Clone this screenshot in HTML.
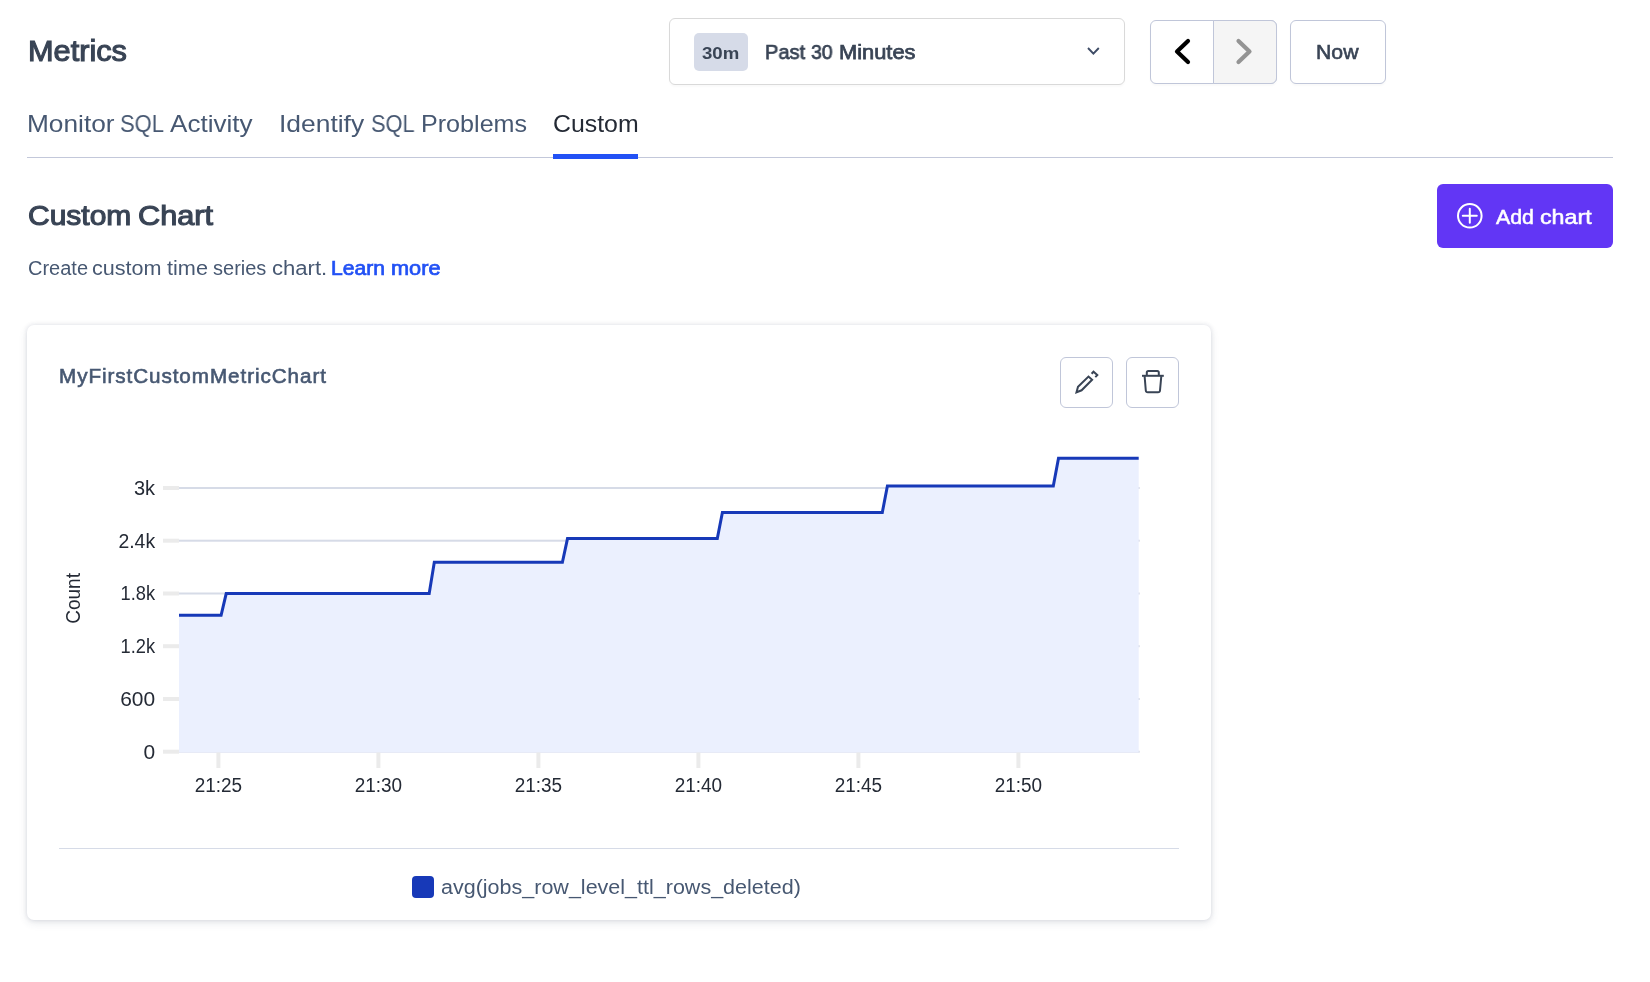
<!DOCTYPE html>
<html lang="en"><head><meta charset="utf-8"><title>Metrics</title>
<style>
html,body{margin:0;padding:0;background:#fff}
body{width:1650px;height:982px;position:relative;overflow:hidden;font-family:"Liberation Sans",sans-serif}
.g{position:absolute;left:0;top:0;width:0;height:0;line-height:1;white-space:nowrap}
.t{position:absolute;display:block;white-space:nowrap;line-height:1;transform-origin:0 0;margin:0;will-change:transform}
.abs{position:absolute;box-sizing:border-box}
#divider{left:27px;top:157px;width:1586px;height:1px;background:#c3c8da}
#tabbar{left:553px;top:154px;width:85px;height:5px;background:#2251f5}
#dd{left:669px;top:18px;width:456px;height:67px;border:1px solid #d9d9d9;border-radius:6px;background:#fff;box-shadow:0 2px 2px rgba(0,0,0,.025)}
#badge{left:694px;top:33px;width:54px;height:38px;background:#d6dbe8;border-radius:5px}
#nav{left:1150px;top:20px;width:127px;height:64px;border:1px solid #c0c6d9;border-radius:6px;background:#fff;overflow:hidden;box-shadow:0 2px 2px rgba(0,0,0,.025)}
#navr{left:1213px;top:20px;width:64px;height:64px;border:1px solid #c0c6d9;border-radius:0 6px 6px 0;background:#f5f5f5}
#nowb{left:1290px;top:20px;width:96px;height:64px;border:1px solid #c0c6d9;border-radius:6px;background:#fff;box-shadow:0 2px 2px rgba(0,0,0,.025)}
#addb{left:1437px;top:184px;width:176px;height:64px;background:#6236f5;border-radius:6px}
#card{left:27px;top:325px;width:1184px;height:595px;background:#fff;border-radius:7px;box-shadow:0 0 4px rgba(60,70,100,.15),0 3px 9px rgba(60,70,100,.12)}
#eb{left:1060px;top:357px;width:53px;height:51px;border:1px solid #c0c6d9;border-radius:6px;background:#fff}
#db{left:1126px;top:357px;width:53px;height:51px;border:1px solid #c0c6d9;border-radius:6px;background:#fff}
#sep{left:59px;top:848px;width:1120px;height:1px;background:#d6dbe7}
#sw{left:412px;top:876px;width:22px;height:22px;background:#1739b8;border-radius:4px}
</style></head><body>
<div class="abs" id="divider"></div><div class="abs" id="tabbar"></div>
<div class="abs" id="dd"></div><div class="abs" id="badge"></div>
<div class="abs" id="nav"></div><div class="abs" id="navr"></div><div class="abs" id="nowb"></div>
<div class="abs" id="addb"></div>
<div class="abs" id="card"></div>
<div class="abs" id="eb"></div><div class="abs" id="db"></div>
<div class="abs" id="sep"></div><div class="abs" id="sw"></div>
<svg id="chart" width="1650" height="982" viewBox="0 0 1650 982" style="position:absolute;left:0;top:0;will-change:transform" font-family="'Liberation Sans', sans-serif">
<rect x="163" y="749.7" width="16" height="4" fill="#ebebeb"/>
<rect x="179" y="750.7" width="960.7" height="2" fill="#d6dbe7"/>
<rect x="163" y="697.0" width="16" height="4" fill="#ebebeb"/>
<rect x="179" y="698.0" width="960.7" height="2" fill="#d6dbe7"/>
<rect x="163" y="644.2" width="16" height="4" fill="#ebebeb"/>
<rect x="179" y="645.2" width="960.7" height="2" fill="#d6dbe7"/>
<rect x="163" y="591.5" width="16" height="4" fill="#ebebeb"/>
<rect x="179" y="592.5" width="960.7" height="2" fill="#d6dbe7"/>
<rect x="163" y="538.7" width="16" height="4" fill="#ebebeb"/>
<rect x="179" y="539.7" width="960.7" height="2" fill="#d6dbe7"/>
<rect x="163" y="486.0" width="16" height="4" fill="#ebebeb"/>
<rect x="179" y="487.0" width="960.7" height="2" fill="#d6dbe7"/>
<path d="M179.0,615.3 L221.1,615.3 L226.2,593.6 L429.2,593.6 L434.3,562.2 L562.4,562.2 L567.5,538.6 L717.3,538.6 L722.4,512.5 L882.3,512.5 L887.4,486.0 L1053.3,486.0 L1058.5,458.3 L1138.7,458.3 L1138.7,752.5 L179.0,752.5 Z" fill="#ebf0fe"/>
<path d="M179.0,615.3 L221.1,615.3 L226.2,593.6 L429.2,593.6 L434.3,562.2 L562.4,562.2 L567.5,538.6 L717.3,538.6 L722.4,512.5 L882.3,512.5 L887.4,486.0 L1053.3,486.0 L1058.5,458.3 L1138.7,458.3" fill="none" stroke="#1739b8" stroke-width="3" stroke-linejoin="miter"/>
<rect x="216.4" y="752.5" width="4" height="15.5" fill="#ebebeb"/>
<text transform="translate(218.4,792.3) scale(.968,1)" font-size="19.6" text-anchor="middle" fill="#242a35">21:25</text>
<rect x="376.4" y="752.5" width="4" height="15.5" fill="#ebebeb"/>
<text transform="translate(378.4,792.3) scale(.968,1)" font-size="19.6" text-anchor="middle" fill="#242a35">21:30</text>
<rect x="536.4" y="752.5" width="4" height="15.5" fill="#ebebeb"/>
<text transform="translate(538.4,792.3) scale(.968,1)" font-size="19.6" text-anchor="middle" fill="#242a35">21:35</text>
<rect x="696.4" y="752.5" width="4" height="15.5" fill="#ebebeb"/>
<text transform="translate(698.4,792.3) scale(.968,1)" font-size="19.6" text-anchor="middle" fill="#242a35">21:40</text>
<rect x="856.4" y="752.5" width="4" height="15.5" fill="#ebebeb"/>
<text transform="translate(858.4,792.3) scale(.968,1)" font-size="19.6" text-anchor="middle" fill="#242a35">21:45</text>
<rect x="1016.4" y="752.5" width="4" height="15.5" fill="#ebebeb"/>
<text transform="translate(1018.4,792.3) scale(.968,1)" font-size="19.6" text-anchor="middle" fill="#242a35">21:50</text>
<text transform="translate(155.1,758.5) scale(1.07,1)" font-size="19.6" text-anchor="end" fill="#242a35">0</text>
<text transform="translate(155.1,705.8) scale(1.07,1)" font-size="19.6" text-anchor="end" fill="#242a35">600</text>
<text transform="translate(155.1,653.0) scale(0.932,1)" font-size="19.6" text-anchor="end" fill="#242a35">1.2k</text>
<text transform="translate(155.1,600.3) scale(0.932,1)" font-size="19.6" text-anchor="end" fill="#242a35">1.8k</text>
<text transform="translate(155.1,547.5) scale(0.99,1)" font-size="19.6" text-anchor="end" fill="#242a35">2.4k</text>
<text transform="translate(155.1,494.8) scale(1.02,1)" font-size="19.6" text-anchor="end" fill="#242a35">3k</text>
<text transform="translate(80.1,598.4) rotate(-90) scale(.972,1)" font-size="19.6" text-anchor="middle" fill="#242a35">Count</text>
</svg>
<svg id="icons" width="1650" height="982" viewBox="0 0 1650 982" style="position:absolute;left:0;top:0" fill="none" stroke-linecap="round" stroke-linejoin="round">
<path d="M1088,48 L1093.4,53.6 L1098.8,48" stroke="#3e4c66" stroke-width="1.9" stroke-linecap="butt" stroke-linejoin="miter"/>
<path d="M1188,41 L1177,51.5 L1188,62" stroke="#000" stroke-width="4.2"/>
<path d="M1238.5,41 L1249.5,51.5 L1238.5,62" stroke="#949494" stroke-width="4.2"/>
<circle cx="1469.8" cy="215.8" r="11.8" stroke="#fff" stroke-width="2"/>
<path d="M1462.8,215.8 H1476.8 M1469.8,208.8 V222.8" stroke="#fff" stroke-width="2"/>
<g stroke="#394455" stroke-width="2" stroke-linejoin="miter" stroke-linecap="butt">
<path d="M1076.5,392.3 L1078,386.7 L1088.5,376.6 L1092.1,379.8 L1081.6,390.3 Z" stroke-miterlimit="3"/>
<path d="M1091.6,373.7 L1093.5,371.7 L1097.3,375.1 L1095.3,377.1"/>
<path d="M1142,375.8 H1163.8"/>
<path d="M1146.8,375 V372.5 Q1146.8,371 1148.3,371 H1157.3 Q1158.8,371 1158.8,372.5 V375"/>
<path d="M1144.6,376.2 L1145.8,390.5 Q1146,392.3 1147.8,392.3 H1158 Q1159.8,392.3 1160,390.5 L1161.3,376.2"/>
</g>
</svg>
<div class="g" id="g_metrics" style="font-size:28.7px;font-weight:400;color:#394455;-webkit-text-stroke:1.1px #394455;"><span class="t" id="metrics" style="left:27.66px;top:36.55px;transform:scaleX(1.0700)">Metrics</span></div>
<div class="g" id="g_tab1" style="font-size:24.1px;font-weight:400;color:#475872;"><span class="t" id="tab1w0" style="left:26.68px;top:112.49px;transform:scaleX(1.0899)">Monitor</span> <span class="t" id="tab1w1" style="left:120.00px;top:112.49px;transform:scaleX(0.9130)">SQL</span> <span class="t" id="tab1w2" style="left:170.40px;top:112.49px;transform:scaleX(1.0818)">Activity</span></div>
<div class="g" id="g_tab2" style="font-size:24.1px;font-weight:400;color:#475872;"><span class="t" id="tab2w0" style="left:278.96px;top:112.49px;transform:scaleX(1.0960)">Identify</span> <span class="t" id="tab2w1" style="left:371.19px;top:112.49px;transform:scaleX(0.9058)">SQL</span> <span class="t" id="tab2w2" style="left:421.33px;top:112.49px;transform:scaleX(1.0424)">Problems</span></div>
<div class="g" id="g_tab3" style="font-size:24.1px;font-weight:400;color:#242a35;"><span class="t" id="tab3" style="left:553.01px;top:112.49px;transform:scaleX(1.0311)">Custom</span></div>
<div class="g" id="g_h2" style="font-size:27.7px;font-weight:400;color:#394455;-webkit-text-stroke:1.1px #394455;"><span class="t" id="h2w0" style="left:27.52px;top:202.09px;transform:scaleX(1.0829)">Custom</span> <span class="t" id="h2w1" style="left:138.29px;top:202.09px;transform:scaleX(1.1082)">Chart</span></div>
<div class="g" id="g_desc" style="font-size:20.0px;font-weight:400;color:#475872;"><span class="t" id="descw0" style="left:27.61px;top:258.10px;transform:scaleX(0.9945)">Create</span> <span class="t" id="descw1" style="left:92.28px;top:258.10px;transform:scaleX(1.0793)">custom</span> <span class="t" id="descw2" style="left:167.01px;top:258.10px;transform:scaleX(1.0837)">time</span> <span class="t" id="descw3" style="left:212.80px;top:258.10px;transform:scaleX(1.0004)">series</span> <span class="t" id="descw4" style="left:271.68px;top:258.10px;transform:scaleX(1.1033)">chart.</span></div>
<div class="g" id="g_learn" style="font-size:19.5px;font-weight:400;color:#2251f5;-webkit-text-stroke:0.7px #2251f5;"><span class="t" id="learnw0" style="left:331.35px;top:258.52px;transform:scaleX(1.0830)">Learn</span> <span class="t" id="learnw1" style="left:390.89px;top:258.52px;transform:scaleX(1.1146)">more</span></div>
<div class="g" id="g_b30" style="font-size:17.2px;font-weight:700;color:#394455;"><span class="t" id="b30" style="left:701.84px;top:45.37px;transform:scaleX(1.0827)">30m</span></div>
<div class="g" id="g_past" style="font-size:20.9px;font-weight:400;color:#394455;-webkit-text-stroke:0.75px #394455;"><span class="t" id="pastw0" style="left:764.84px;top:41.74px;transform:scaleX(0.9610)">Past</span> <span class="t" id="pastw1" style="left:811.20px;top:41.74px;transform:scaleX(0.9329)">30</span> <span class="t" id="pastw2" style="left:838.95px;top:41.74px;transform:scaleX(1.0460)">Minutes</span></div>
<div class="g" id="g_now" style="font-size:20.4px;font-weight:400;color:#394455;-webkit-text-stroke:0.6px #394455;"><span class="t" id="now" style="left:1316.06px;top:41.76px;transform:scaleX(1.0408)">Now</span></div>
<div class="g" id="g_add" style="font-size:19.6px;font-weight:400;color:#ffffff;-webkit-text-stroke:0.5px #ffffff;"><span class="t" id="addw0" style="left:1495.70px;top:208.24px;transform:scaleX(1.0893)">Add</span> <span class="t" id="addw1" style="left:1539.79px;top:208.24px;transform:scaleX(1.1856)">chart</span></div>
<div class="g" id="g_ctitle" style="font-size:19.9px;font-weight:400;color:#475872;-webkit-text-stroke:0.6px #475872;letter-spacing:0.9px;"><span class="t" id="ctitle" style="left:59.08px;top:366.78px;transform:scaleX(1.0379)">MyFirstCustomMetricChart</span></div>
<div class="g" id="g_legend" style="font-size:20.0px;font-weight:400;color:#475872;"><span class="t" id="legend" style="left:441.20px;top:876.80px;transform:scaleX(1.0753)">avg(jobs_row_level_ttl_rows_deleted)</span></div>
</body></html>
